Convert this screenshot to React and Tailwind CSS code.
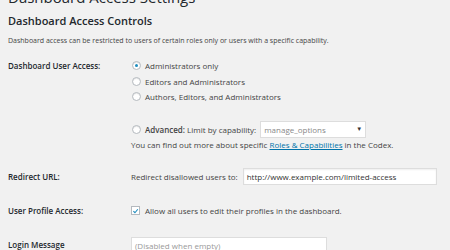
import React from "react";

function Radio({ checked }) {
  return (
    <span className="inline-flex h-[9px] w-[9px] shrink-0 items-center justify-center rounded-full border border-[#b4b9be] bg-white shadow-[inset_0_1px_1px_rgba(0,0,0,0.1)]">
      {checked && <span className="h-[3px] w-[3px] rounded-full bg-[#1e8cbe]" />}
    </span>
  );
}

export default function App() {
  return (
    <div
      className="h-[250px] w-[450px] overflow-hidden bg-[#f1f1f1] text-[#444]"
      style={{ fontFamily: '"Open Sans", sans-serif' }}
    >
      <div className="px-2">
        <div className="mt-[-10px] text-[15px] leading-[15px] text-[#23282d]">Dashboard Access Settings</div>
        <div className="mt-[9px] text-[11px] font-semibold leading-[14px] text-[#23282d]">Dashboard Access Controls</div>
        <div className="mt-[8px] text-[7px] leading-[10px]">
          Dashboard access can be restricted to users of certain roles only or users with a specific capability.
        </div>

        <div className="mt-[14px] flex text-[8px] leading-[11px]">
          <div className="w-[123px] shrink-0 font-semibold text-[#23282d]">Dashboard User Access:</div>
          <div className="flex flex-col">
            <div className="flex items-center gap-[4px] pl-[1px]">
              <Radio checked />
              <span>Administrators only</span>
            </div>
            <div className="mt-[4.5px] flex items-center gap-[4px] pl-[1px]">
              <Radio />
              <span>Editors and Administrators</span>
            </div>
            <div className="mt-[4.5px] flex items-center gap-[4px] pl-[1px]">
              <Radio />
              <span>Authors, Editors, and Administrators</span>
            </div>
            <div className="mt-[19px] flex items-center gap-[4px] pl-[1px]">
              <Radio />
              <span>
                <span className="font-semibold">Advanced:</span> Limit by capability:
              </span>
              <div className="flex h-[17px] w-[106px] items-center justify-between border border-[#ddd] bg-white px-[3px] text-[#888]">
                <span>manage_options</span>
                <span className="text-[6px] text-[#333]">▼</span>
              </div>
            </div>
            <div className="mt-[1px]">
              You can find out more about specific{" "}
              <span className="text-[#0073aa] underline">Roles &amp; Capabilities</span> in the Codex.
            </div>
          </div>
        </div>

        <div className="mt-[18px] flex items-center text-[8px] leading-[11px]">
          <div className="w-[123px] shrink-0 font-semibold text-[#23282d]">Redirect URL:</div>
          <span>Redirect disallowed users to:</span>
          <div className="ml-[5px] flex h-[17px] w-[194px] items-center border border-[#ddd] bg-white px-[3px] text-[#333] shadow-[inset_0_1px_2px_rgba(0,0,0,0.07)]">
            http://www.example.com/limited-access
          </div>
        </div>

        <div className="mt-[20px] flex items-center text-[8px] leading-[11px]">
          <div className="w-[123px] shrink-0 font-semibold text-[#23282d]">User Profile Access:</div>
          <span className="flex h-[9px] w-[9px] items-center justify-center border border-[#b4b9be] bg-white">
            <svg viewBox="0 0 10 10" className="h-[8px] w-[8px]">
              <path d="M2 5.2 L4.2 7.5 L8.3 2.5" fill="none" stroke="#1e8cbe" strokeWidth="1.6" />
            </svg>
          </span>
          <span className="ml-[5px]">Allow all users to edit their profiles in the dashboard.</span>
        </div>

        <div className="mt-[21px] flex items-start text-[8px] leading-[11px]">
          <div className="w-[123px] shrink-0 pt-[2px] font-semibold text-[#23282d]">Login Message</div>
          <div className="h-[20px] w-[196px] border border-[#ddd] bg-white px-[3px] pt-[2px] text-[#999]">
            (Disabled when empty)
          </div>
        </div>
      </div>
    </div>
  );
}
